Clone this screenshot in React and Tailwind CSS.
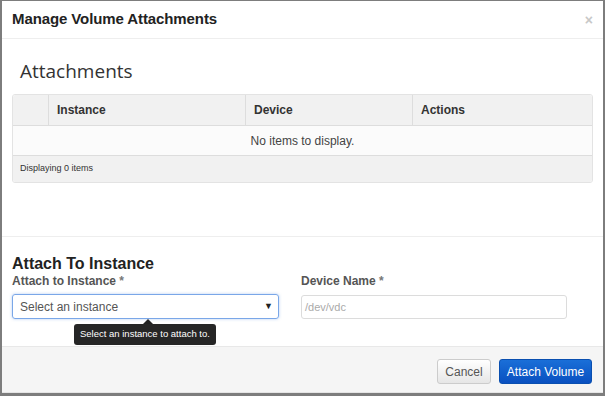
import React from "react";

export default function App() {
  return (
    <div className="w-[605px] h-[396px] bg-white overflow-hidden border-l-2 border-r-2 border-t border-b-[3px] border-[#7d7d7d] flex flex-col" style={{ fontFamily: '"Liberation Sans", Arial, sans-serif' }}>
      {/* Header */}
      <div className="h-[38px] flex items-center justify-between pl-[10px] pr-[10px] border-b border-[#eeeeee] shrink-0">
        <div className="text-[15px] font-bold text-[#222] tracking-[-0.1px]">Manage Volume Attachments</div>
        <div className="text-[14px] font-bold text-[#c8c8c8] leading-none">×</div>
      </div>
      {/* Body */}
      <div className="h-[198px] shrink-0 border-b border-[#eeeeee] px-[10px]">
        <div className="pt-[20px] pl-[8px] text-[19px] text-[#333] leading-[24px]" style={{ fontFamily: '"Open Sans", sans-serif' }}>Attachments</div>
        <div className="mt-[11px] border border-[#e3e3e3] rounded-[3px] overflow-hidden text-[12px]">
          <div className="flex h-[31px] bg-[#f1f1f1] border-b border-[#dddddd] font-bold text-[#333]">
            <div className="w-[36px] border-r border-[#dddddd]"></div>
            <div className="w-[197px] border-r border-[#dddddd] pl-[8px] flex items-center">Instance</div>
            <div className="w-[167px] border-r border-[#dddddd] pl-[8px] flex items-center">Device</div>
            <div className="flex-1 pl-[8px] flex items-center">Actions</div>
          </div>
          <div className="h-[30px] flex items-center justify-center bg-[#fbfbfb] border-b border-[#dddddd] text-[#444]">No items to display.</div>
          <div className="h-[26px] flex items-center pl-[7px] bg-[#f1f1f1] text-[9px] text-[#333]">Displaying 0 items</div>
        </div>
      </div>
      {/* Form */}
      <div className="relative h-[110px] shrink-0 px-[10px] pt-[17px] border-b border-[#e8e8e8]">
        <div className="text-[16px] font-bold text-[#222] leading-[19px]">Attach To Instance</div>
        <div className="flex gap-[22px]">
          <div className="w-[267px]">
            <div className="text-[12px] font-bold text-[#555] leading-[16px]">Attach to Instance <span className="text-[#777]">*</span></div>
            <div className="mt-[5px] h-[25px] border border-[#7aa7e8] rounded-[3px] flex items-center justify-between pl-[7px] pr-[5px] text-[12px] text-[#555] shadow-[0_0_3px_rgba(102,153,230,0.5)]">
              <span>Select an instance</span>
              <span className="text-[9px] text-[#222]">▼</span>
            </div>
          </div>
          <div className="w-[266px]">
            <div className="text-[12px] font-bold text-[#555] leading-[16px]">Device Name <span className="text-[#777]">*</span></div>
            <div className="mt-[6px] h-[24px] border border-[#dcdcdc] rounded-[3px] flex items-center pl-[3px] text-[11px] text-[#aaa]">/dev/vdc</div>
          </div>
        </div>
        {/* tooltip */}
        <div className="absolute left-[72px] top-[87px]">
          <div className="absolute left-[69px] -top-[5px] w-0 h-0 border-l-[5px] border-r-[5px] border-b-[5px] border-l-transparent border-r-transparent border-b-[#222]"></div>
          <div className="bg-[#262626] text-white text-[9.5px] rounded-[3px] px-[6px] h-[21px] flex items-center whitespace-nowrap">Select an instance to attach to.</div>
        </div>
      </div>
      {/* Footer */}
      <div className="flex-1 bg-[#f5f5f5] flex items-start justify-end gap-[8px] pr-[11px] pt-[12px] border-b border-[#e5e5e5]">
        <button className="h-[25px] w-[54px] border border-[#cccccc] rounded-[3px] bg-gradient-to-b from-[#ffffff] to-[#e6e6e6] text-[12px] text-[#555]">Cancel</button>
        <button className="h-[25px] w-[93px] border border-[#0a4fb0] rounded-[3px] bg-gradient-to-b from-[#1a6fd8] to-[#0a50c0] text-[12px] text-white">Attach Volume</button>
      </div>
    </div>
  );
}
